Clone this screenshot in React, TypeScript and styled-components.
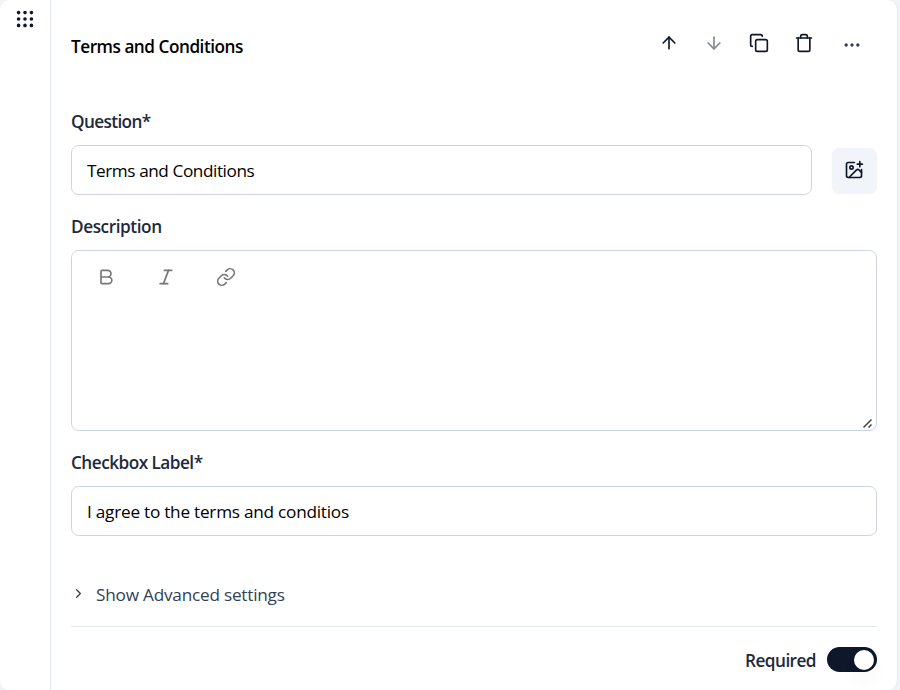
import React from "react";
import styled, { createGlobalStyle } from "styled-components";
import {
  ArrowDown, ArrowUp, Bold, ChevronRight, Copy, Ellipsis, Grip, ImagePlus, Italic, Link, Trash,
} from "lucide-react";

const GlobalStyle = createGlobalStyle`
  *, *::before, *::after { box-sizing: border-box; }
  html, body { margin: 0; height: 690px; overflow: hidden; }
  body {
    background: #f1f3f7;
    color: #1e293b;
    font-family: "Open Sans", "Noto Sans", sans-serif;
  }
`;

const Card = styled.main`
  display: flex;
  width: 898px;
  height: 690px;
  background: #fff;
  border-right: 1px solid #e2e8f0;
  border-radius: 10px;
  overflow: hidden;
`;

const DragRail = styled.aside`
  display: flex;
  justify-content: center;
  flex: none;
  width: 51px;
  padding-top: 8px;
  border-right: 1px solid #e2e8f0;
  color: #0f172a;
`;

const Content = styled.section`
  display: flex;
  flex-direction: column;
  flex: 1;
  padding: 0 20px;

  > * {
    flex-shrink: 0;
  }
`;

const Header = styled.header`
  display: flex;
  justify-content: space-between;
  height: 109px;
`;

const Text = styled.span<{ $track?: number; $medium?: boolean; $color?: string }>`
  font-size: 17.2px;
  line-height: 25px;
  font-weight: ${(p) => (p.$medium ? 600 : 400)};
  letter-spacing: ${(p) => p.$track ?? -0.4}px;
  color: ${(p) => p.$color ?? "#1e293b"};
  white-space: nowrap;
`;

const Title = styled(Text).attrs({ as: "h1" })`
  margin: 34px 0 0;
`;

const Actions = styled.div`
  display: flex;
  align-items: center;
  gap: 25px;
  height: 20px;
  margin: 33px 15px 0 0;
`;

const IconButton = styled.button<{ $faded?: boolean }>`
  display: flex;
  padding: 0;
  border: 0;
  background: none;
  color: #0f172a;
  opacity: ${(p) => (p.$faded ? 0.5 : 1)};
`;

const MoreButton = styled(IconButton)`
  color: #334155;
  padding-top: 4px;
  margin-left: 3px;
`;

const Label = styled(Text).attrs({ as: "label" })`
  height: 25px;
  margin-bottom: 11px;
`;

const QuestionRow = styled.div`
  display: flex;
  align-items: center;
  gap: 20px;
  margin-bottom: 19px;
`;

const Field = styled.div`
  display: flex;
  align-items: center;
  flex: 1;
  height: 50px;
  padding: 1px 15px 0;
  border: 1px solid #cbd5e1;
  border-radius: 7.5px;
`;

const LabelField = styled(Field)`
  flex: none;
  width: 100%;
`;

const ImageButton = styled.button`
  display: flex;
  align-items: center;
  justify-content: center;
  width: 45px;
  height: 45px;
  margin-top: 1px;
  padding: 0 1px 1px 0;
  border: 0;
  border-radius: 7.5px;
  background: #f1f5f9;
  box-shadow: 0 1px 2px rgba(0, 0, 0, 0.05);
  color: #0f172a;
`;

const Editor = styled.div`
  display: flex;
  flex-direction: column;
  justify-content: space-between;
  height: 181px;
  margin-bottom: 19px;
  border: 1px solid #cbd5e1;
  border-radius: 7.5px;
`;

const EditorTools = styled.div`
  display: flex;
  gap: 40px;
  padding: 16px 24px;
  color: #777;
`;

const ResizeGrip = styled.svg`
  align-self: flex-end;
  margin: 0 4px 2px 0;
`;

const Advanced = styled.div`
  display: flex;
  align-items: center;
  gap: 10px;
  height: 90px;
  margin-top: 1px;
  padding: 25px 0 0;
  border-bottom: 1px solid #e2e8f0;
  color: #334155;

  svg {
    margin-bottom: 2px;
  }
`;

const Footer = styled.footer`
  display: flex;
  align-items: center;
  justify-content: flex-end;
  gap: 11px;
  height: 65px;
`;

const RequiredText = styled(Text)`
  padding-top: 2px;
`;

const Toggle = styled.div`
  display: flex;
  align-items: center;
  justify-content: flex-end;
  width: 50px;
  height: 25px;
  padding: 0 3px;
  border-radius: 13px;
  background: #0f172a;
`;

const Knob = styled.span`
  width: 20px;
  height: 20px;
  border-radius: 50%;
  background: #fff;
  box-shadow: 0 12px 18px rgba(0, 0, 0, 0.04);
`;

export default function App() {
  return (
    <>
      <GlobalStyle />
      <Card>
        <DragRail><Grip size={22} /></DragRail>
        <Content>
          <Header>
            <Title $medium $color="#000" $track={-0.48}>Terms and Conditions</Title>
            <Actions>
              <IconButton aria-label="Move up"><ArrowUp size={20} /></IconButton>
              <IconButton aria-label="Move down" $faded><ArrowDown size={20} /></IconButton>
              <IconButton aria-label="Duplicate"><Copy size={20} /></IconButton>
              <IconButton aria-label="Delete"><Trash size={20} /></IconButton>
              <MoreButton aria-label="More"><Ellipsis size={20} /></MoreButton>
            </Actions>
          </Header>
          <Label $medium $track={-0.62}>Question*</Label>
          <QuestionRow>
            <Field><Text $color="#000" $track={-0.43}>Terms and Conditions</Text></Field>
            <ImageButton aria-label="Add image"><ImagePlus size={20} /></ImageButton>
          </QuestionRow>
          <Label $medium $track={-0.42}>Description</Label>
          <Editor>
            <EditorTools>
              <Bold size={20} />
              <Italic size={20} />
              <Link size={20} />
            </EditorTools>
            <ResizeGrip width="10" height="10" viewBox="0 0 10 10" fill="none" stroke="#444" strokeWidth="1.5">
              <path d="M1.5 9.5L9.5 1.5M6.5 9.5L9.5 6.5" />
            </ResizeGrip>
          </Editor>
          <Label $medium $track={-0.52}>Checkbox Label*</Label>
          <LabelField><Text $color="#000" $track={-0.24}>I agree to the terms and conditios</Text></LabelField>
          <Advanced>
            <ChevronRight size={15} />
            <Text $color="#334155" $track={-0.22}>Show Advanced settings</Text>
          </Advanced>
          <Footer>
            <RequiredText $medium $track={-0.55}>Required</RequiredText>
            <Toggle><Knob /></Toggle>
          </Footer>
        </Content>
      </Card>
    </>
  );
}
